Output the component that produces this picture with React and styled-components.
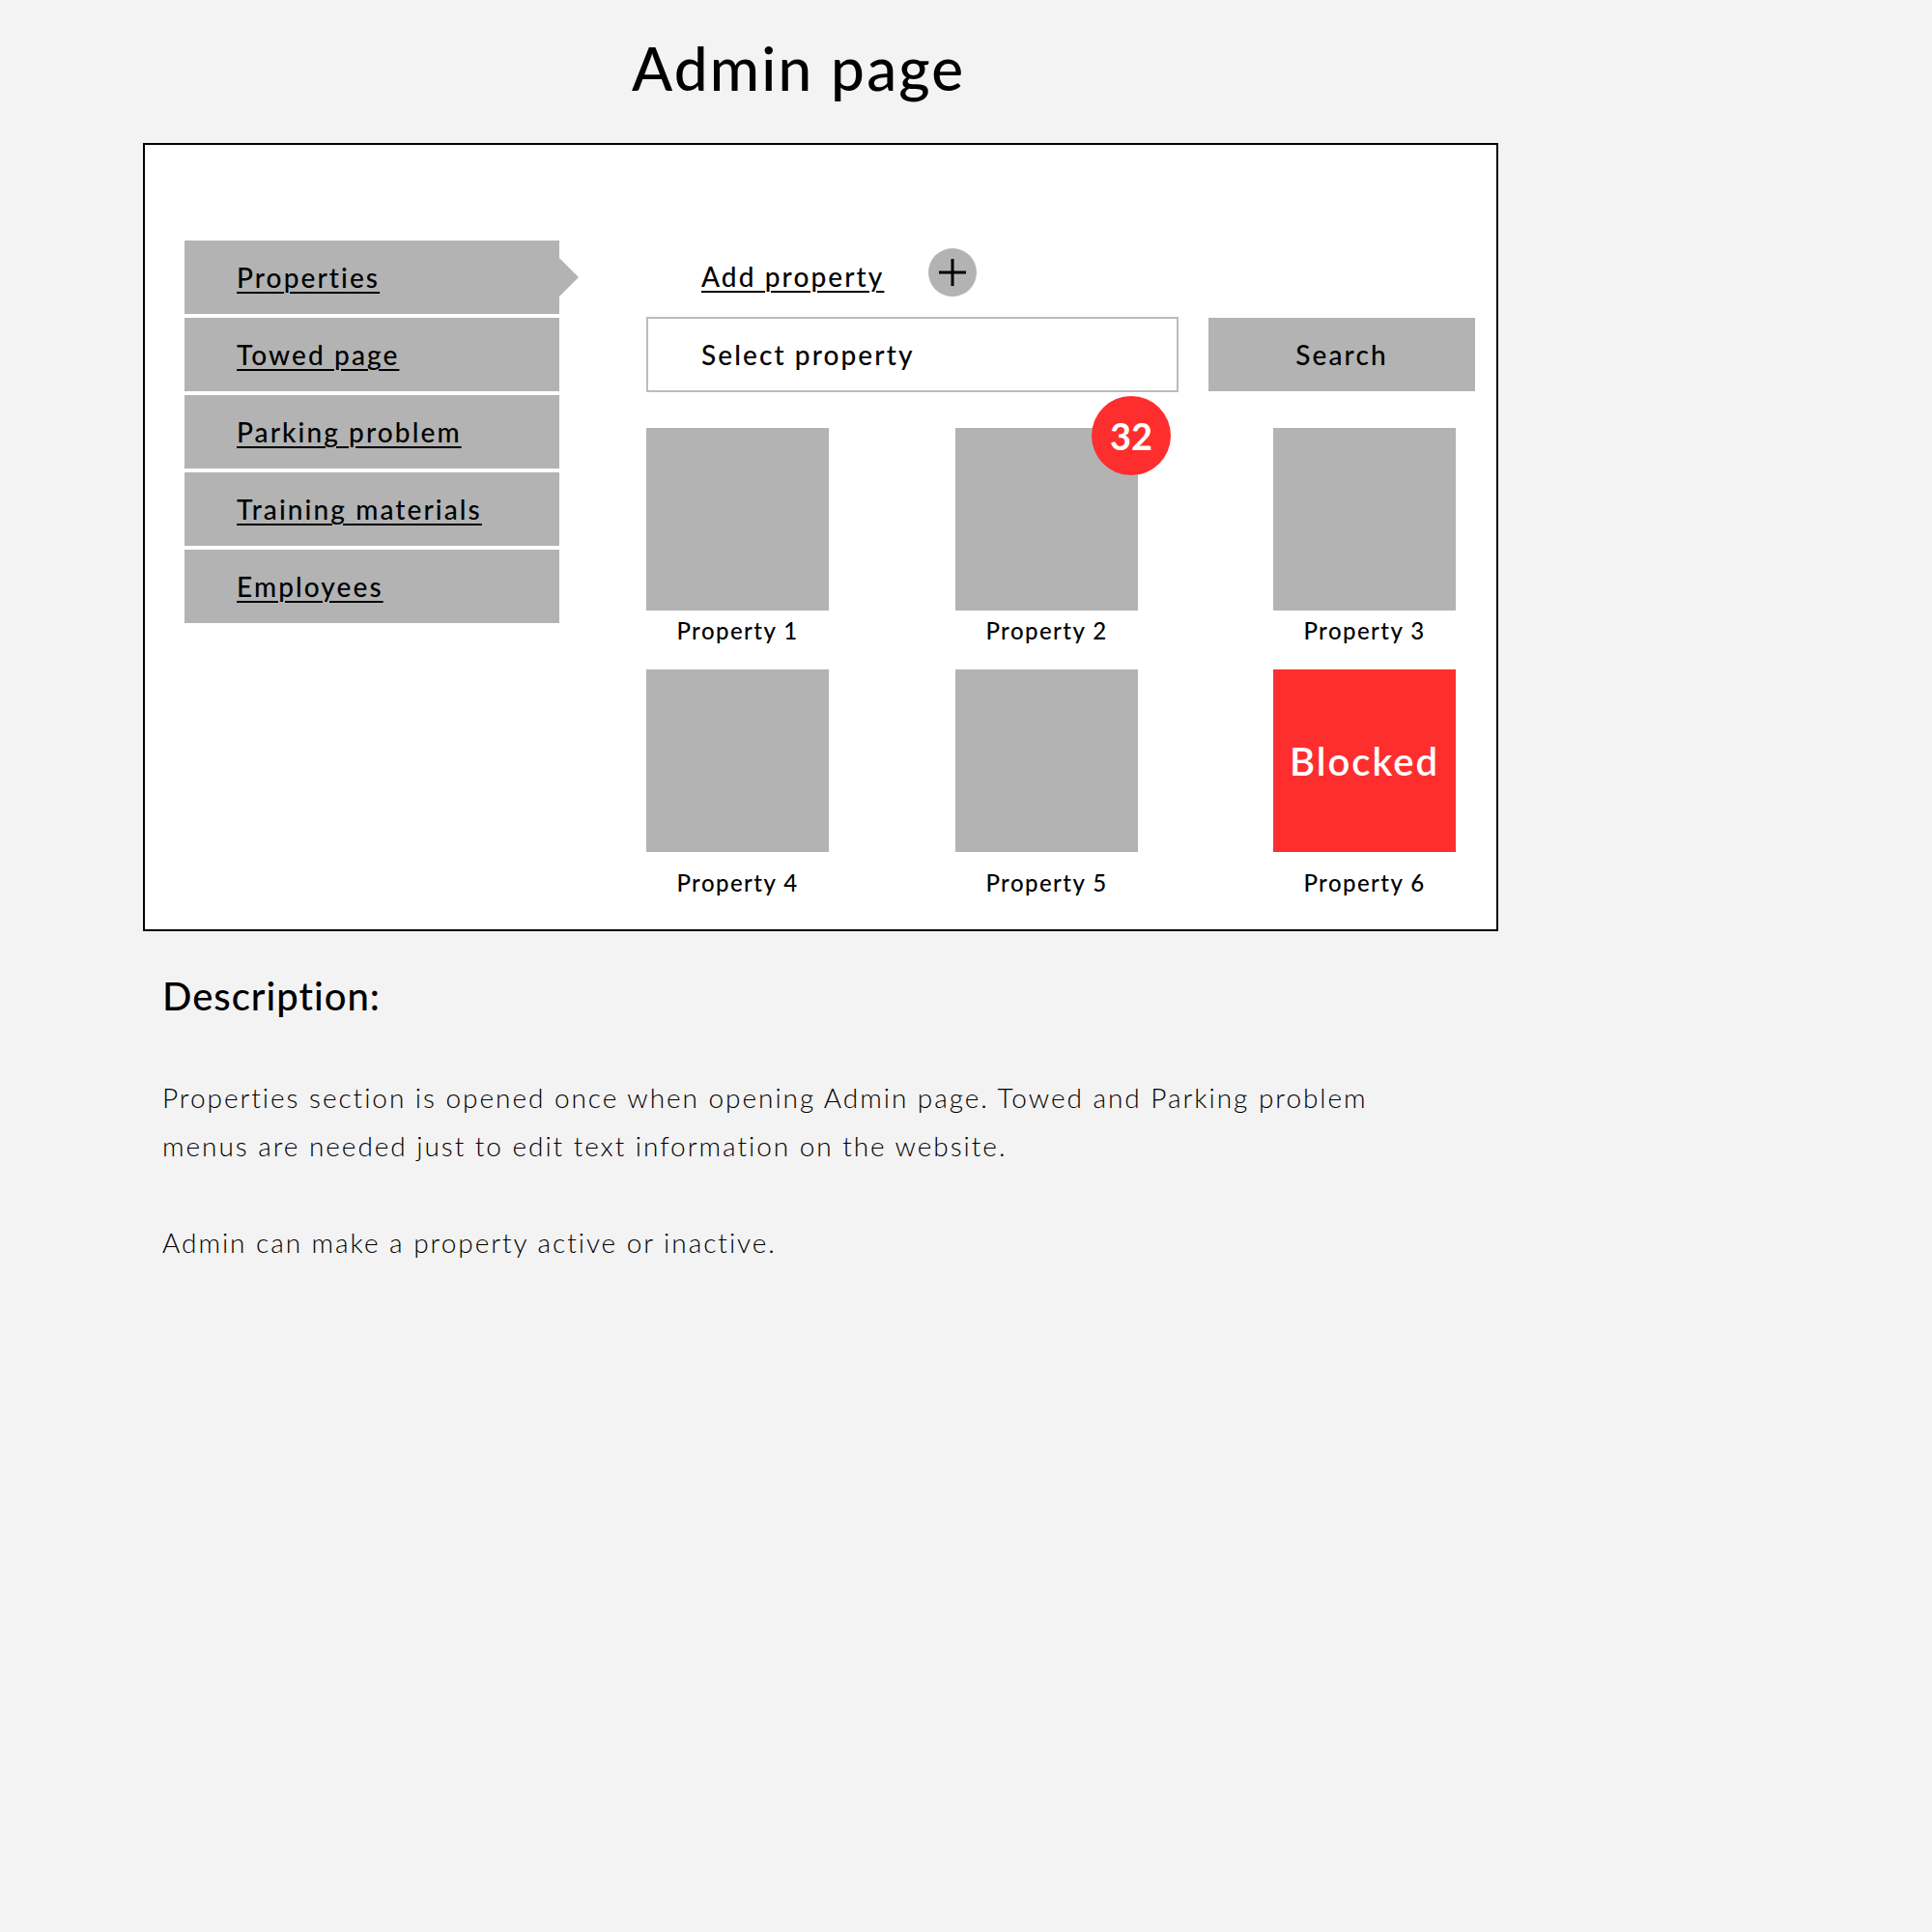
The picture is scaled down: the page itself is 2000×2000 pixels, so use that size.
import React from "react";
import styled, { createGlobalStyle } from "styled-components";

const GlobalStyle = createGlobalStyle`
    body {
        margin: 0;
        background: #f3f3f3;
        font-family: Lato, "Open Sans", sans-serif;
        color: #000;
    }
`;

const Page = styled.div`
    padding: 33px 0 80px 148px;
`;

const Title = styled.h1`
    margin: 0 0 41px 506px;
    font-size: 62px;
    line-height: 74px;
    font-weight: 500;
    letter-spacing: 0.035em;
`;

const Frame = styled.section`
    box-sizing: border-box;
    width: 1403px;
    height: 816px;
    border: 2px solid #000;
    background: #fff;
    display: flex;
    gap: 90px;
    padding: 99px 0 0 41px;
`;

const Menu = styled.nav`
    width: 388px;
    display: flex;
    flex-direction: column;
    gap: 4px;
`;

const MenuItem = styled.div`
    position: relative;
    height: 76px;
    background: #b3b3b3;
    display: flex;
    align-items: center;
    padding-left: 54px;

    ${(p) => p.$active && `
        &::after {
            content: "";
            position: absolute;
            right: -20px;
            top: 18px;
            border-left: 20px solid #b3b3b3;
            border-top: 20px solid transparent;
            border-bottom: 20px solid transparent;
        }
    `}
`;

const LinkText = styled.a`
    font-size: 28px;
    font-weight: 500;
    letter-spacing: 0.075em;
    color: #000;
    text-decoration: underline;
    text-decoration-thickness: 2px;
    text-underline-offset: 4px;
    cursor: pointer;
`;

const AddLink = styled(LinkText)`
    padding-top: 7px;
`;

const Content = styled.div`
    width: 858px;
    margin-top: 8px;
    display: flex;
    flex-direction: column;
`;

const AddRow = styled.div`
    display: flex;
    align-items: center;
    gap: 46px;
    height: 50px;
    padding-left: 57px;
`;

const PlusButton = styled.button`
    width: 50px;
    height: 50px;
    border: none;
    border-radius: 50%;
    background: #b3b3b3;
    padding: 0;
    display: flex;
    align-items: center;
    justify-content: center;
`;

const SearchRow = styled.div`
    margin-top: 21px;
    display: flex;
    align-items: center;
    gap: 31px;
`;

const SelectBox = styled.div`
    box-sizing: border-box;
    width: 551px;
    height: 78px;
    border: 2px solid #bcbcbc;
    padding-left: 55px;
    display: flex;
    align-items: center;
    font-size: 28px;
    font-weight: 500;
    letter-spacing: 0.075em;
`;

const SearchButton = styled.button`
    width: 276px;
    height: 76px;
    border: none;
    background: #b3b3b3;
    font-family: inherit;
    font-size: 28px;
    font-weight: 500;
    letter-spacing: 0.075em;
    color: #000;
`;

const Grid = styled.div`
    margin-top: 37px;
    display: grid;
    grid-template-columns: 320px 329px 189px;
    justify-items: start;
    row-gap: 26px;
`;

const Card = styled.div`
    width: 189px;
    display: flex;
    flex-direction: column;
    align-items: center;
`;

const Tile = styled.div`
    position: relative;
    width: 189px;
    height: 189px;
    background: ${(p) => (p.$blocked ? "#fe2e2f" : "#b3b3b3")};
    display: flex;
    align-items: center;
    justify-content: center;
    color: #fff;
    font-size: 40px;
    font-weight: 600;
    letter-spacing: 0.05em;
`;

const Badge = styled.span`
    position: absolute;
    top: -33px;
    right: -34px;
    width: 82px;
    height: 82px;
    border-radius: 50%;
    background: #fe2e2f;
    color: #fff;
    font-size: 38px;
    font-weight: 700;
    letter-spacing: 0;
    display: flex;
    align-items: center;
    justify-content: center;
`;

const Label = styled.div`
    margin-top: ${(p) => p.$gap}px;
    font-size: 24px;
    line-height: 29px;
    font-weight: 500;
    letter-spacing: 0.06em;
    white-space: nowrap;
`;

const Description = styled.h2`
    margin: 43px 0 0 20px;
    font-size: 40px;
    line-height: 48px;
    font-weight: 500;
    letter-spacing: 0.025em;
`;

const Paragraph = styled.p`
    margin: ${(p) => p.$top}px 0 0 20px;
    font-size: 28px;
    line-height: 50px;
    font-weight: 300;
    letter-spacing: 0.07em;
`;

const menu = ["Properties", "Towed page", "Parking problem", "Training materials", "Employees"];

const properties = [
    { name: "Property 1" },
    { name: "Property 2", badge: 32 },
    { name: "Property 3" },
    { name: "Property 4" },
    { name: "Property 5" },
    { name: "Property 6", blocked: true },
];

export default function App() {
    return (
        <Page>
            <GlobalStyle />
            <Title>Admin page</Title>

            <Frame>
                <Menu>
                    {menu.map((item, i) => (
                        <MenuItem key={item} $active={i === 0}>
                            <LinkText>{item}</LinkText>
                        </MenuItem>
                    ))}
                </Menu>

                <Content>
                    <AddRow>
                        <AddLink>Add property</AddLink>
                        <PlusButton aria-label="Add property">
                            <svg width="30" height="30" viewBox="0 0 30 30">
                                <path d="M15 1v28M1 15h28" stroke="#000" strokeWidth="3" fill="none" />
                            </svg>
                        </PlusButton>
                    </AddRow>

                    <SearchRow>
                        <SelectBox>Select property</SelectBox>
                        <SearchButton>Search</SearchButton>
                    </SearchRow>

                    <Grid>
                        {properties.map((p, i) => (
                            <Card key={p.name}>
                                <Tile $blocked={p.blocked}>
                                    {p.blocked && "Blocked"}
                                    {p.badge && <Badge>{p.badge}</Badge>}
                                </Tile>
                                <Label $gap={i < 3 ? 6 : 17}>{p.name}</Label>
                            </Card>
                        ))}
                    </Grid>
                </Content>
            </Frame>

            <Description>Description:</Description>
            <Paragraph $top={56}>
                Properties section is opened once when opening Admin page. Towed and Parking problem <br />
                menus are needed just to edit text information on the website.
            </Paragraph>
            <Paragraph $top={50}>Admin can make a property active or inactive.</Paragraph>
        </Page>
    );
}
